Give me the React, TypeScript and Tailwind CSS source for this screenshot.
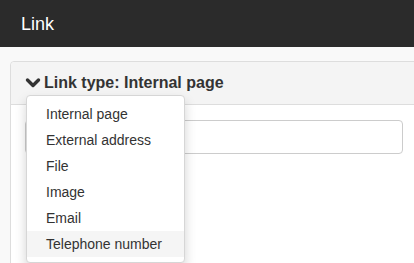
const options = ['Internal page', 'External address', 'File', 'Image', 'Email', 'Telephone number'];

function ChevronDown() {
    return (
        <svg width="16" height="12" viewBox="0 0 16 12" className="shrink-0">
            <polyline points="2.5,3 8,8.5 13.5,3" fill="none" stroke="#333" strokeWidth="3.4" strokeLinecap="round" strokeLinejoin="round" />
        </svg>
    );
}

export default function App() {
    const active = 'Telephone number';

    return (
        <div className="h-[263px] w-[414px] overflow-hidden bg-[#f9f9f9] font-['Liberation_Sans',Arial,sans-serif] text-[#333]">
            <div className="h-[47px] bg-[#2b2b2b] flex items-center pl-[21px]">
                <h1 className="text-white text-[18px] leading-none">Link</h1>
            </div>
            <div className="pt-[14px] pl-[10px]">
                <div className="relative w-[408px] h-[230px] bg-white border border-[#dddddd] rounded-[4px]">
                    <div className="h-[43px] bg-[#f4f4f4] border-b border-[#dddddd] rounded-t-[4px] flex items-center pl-[14px] gap-[3px]">
                        <ChevronDown />
                        <span className="text-[16px] font-bold leading-none">Link type: Internal page</span>
                    </div>
                    <div className="pt-[15px] px-[14px]">
                        <input type="text" className="block w-[378px] h-[34px] border border-[#cccccc] rounded-[4px] bg-white outline-none" />
                    </div>
                    <ul className="absolute left-[15px] top-[33px] w-[159px] py-[5px] bg-white border border-[#d6d6d6] rounded-[4px] shadow-[0_6px_12px_rgba(0,0,0,0.175)]">
                        {options.map((opt) => (
                            <li
                                key={opt}
                                className={`h-[26px] flex items-center pl-[19px] text-[14px] leading-none ${opt === active ? 'bg-[#f5f5f5]' : ''}`}
                            >
                                {opt}
                            </li>
                        ))}
                    </ul>
                </div>
            </div>
        </div>
    );
}
